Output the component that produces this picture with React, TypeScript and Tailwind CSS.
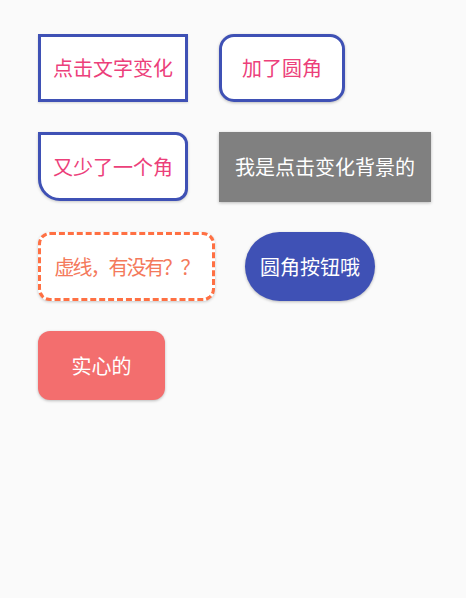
import React from 'react';

const font = { fontFamily: '"Noto Sans CJK SC", "Noto Sans", sans-serif' };

function App() {
  return (
    <div className="min-h-[598px] w-[466px] bg-[#fafafa] pl-[38px] pt-[34px]" style={font}>
      <div className="flex flex-col gap-[30px]">
        <div className="flex gap-[31px]">
          <div className="flex h-[68px] w-[150px] items-center justify-center border-[3px] border-[#3f51b5] bg-white text-[20px] text-[#ec407a] shadow-[0_1px_2px_rgba(0,0,0,0.15)]">
            点击文字变化
          </div>
          <div className="flex h-[68px] w-[126px] items-center justify-center rounded-[15px] border-[3px] border-[#3f51b5] bg-white text-[20px] text-[#ec407a] shadow-[0_1px_3px_rgba(0,0,0,0.25)]">
            加了圆角
          </div>
        </div>
        <div className="flex gap-[31px]">
          <div className="flex h-[69px] w-[150px] items-center justify-center rounded-tl-none rounded-tr-[12px] rounded-br-[12px] rounded-bl-[22px] border-[3px] border-[#3f51b5] bg-white text-[20px] text-[#ec407a] shadow-[0_1px_3px_rgba(0,0,0,0.2)]">
            又少了一个角
          </div>
          <div className="flex h-[70px] w-[212px] items-center justify-center bg-[#808080] text-[20px] text-white shadow-[0_1px_3px_rgba(0,0,0,0.25)]">
            我是点击变化背景的
          </div>
        </div>
        <div className="flex gap-[30px]">
          <div className="flex h-[69px] w-[177px] items-center justify-center rounded-[12px] border-[3px] border-dashed border-[#ff7043] bg-white text-[20px] tracking-[-2px] text-[#f4795b] shadow-[0_1px_3px_rgba(0,0,0,0.2)]">
            虚线，有没有？？
          </div>
          <div className="flex h-[69px] w-[130px] items-center justify-center rounded-full bg-[#3f51b5] text-[20px] text-white shadow-[0_1px_3px_rgba(0,0,0,0.25)]">
            圆角按钮哦
          </div>
        </div>
        <div className="flex">
          <div className="flex h-[69px] w-[127px] items-center justify-center rounded-[12px] bg-[#f36e6e] text-[20px] text-white shadow-[0_1px_3px_rgba(0,0,0,0.25)]">
            实心的
          </div>
        </div>
      </div>
    </div>
  );
}

export default App;
